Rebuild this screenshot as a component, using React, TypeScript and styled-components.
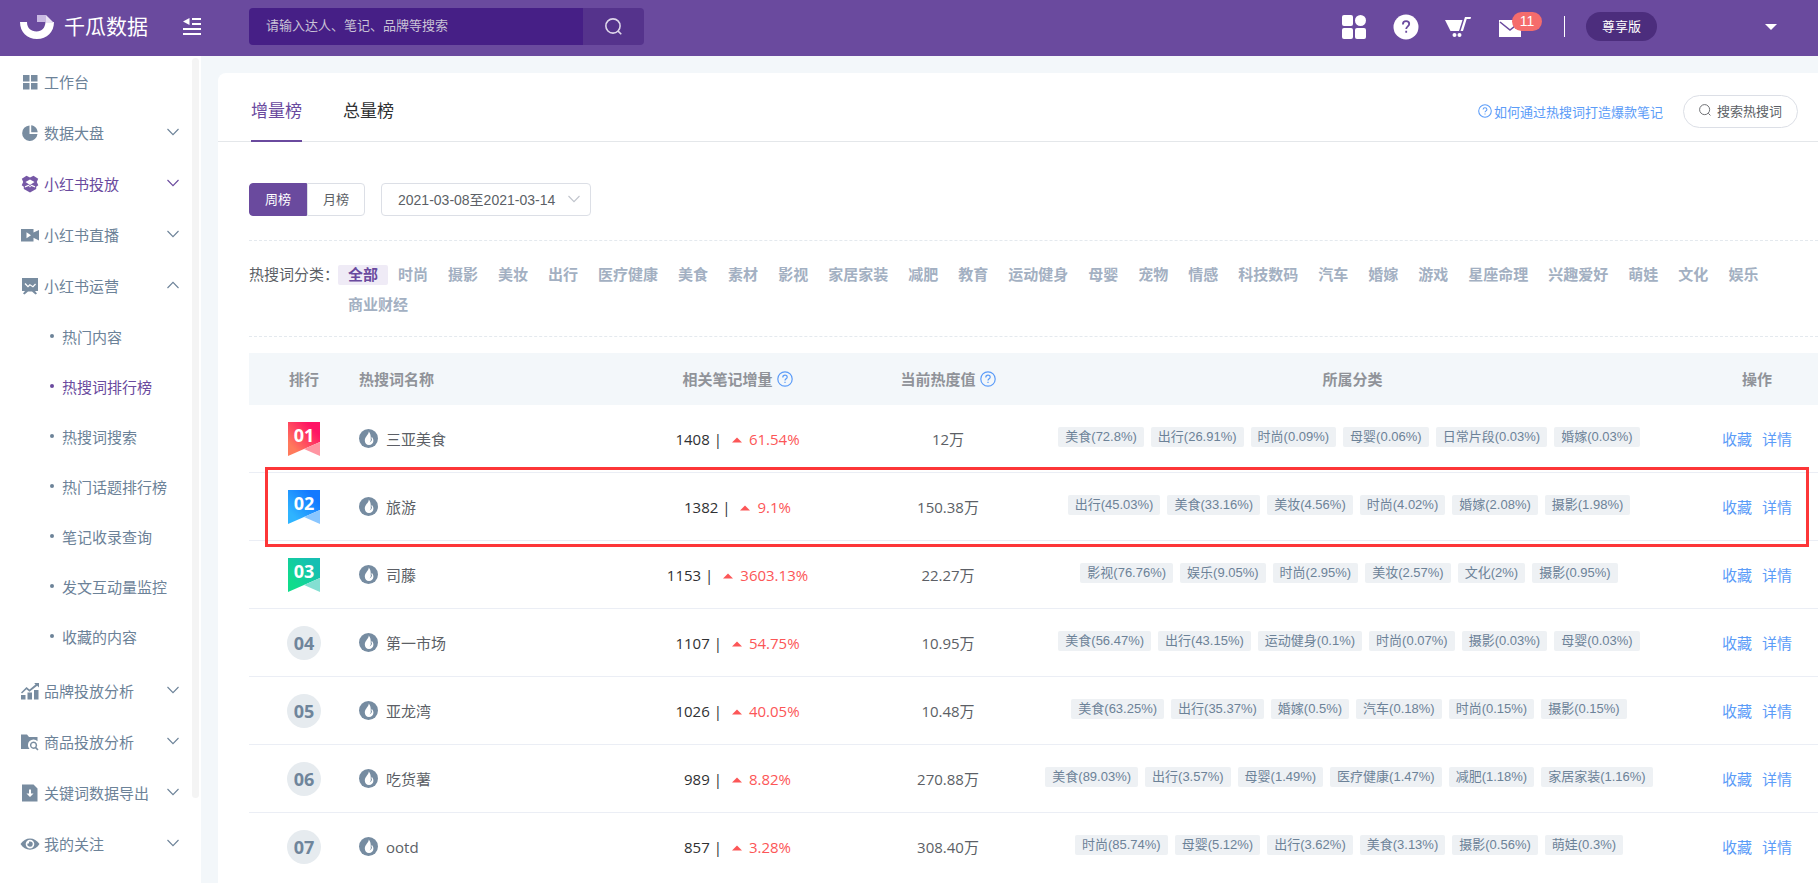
import React from "react";
import styled, { createGlobalStyle, css } from "styled-components";

const purple = "#6a4a9e";
const slate = "#6c8298";
const blue = "#5b9cf8";
const uiFont = `"Liberation Sans", "Noto Sans CJK SC", sans-serif`;
const textFont = `"Open Sans", "Noto Sans CJK SC", sans-serif`;

const GlobalStyle = createGlobalStyle`
  * { box-sizing: border-box; }
  body { margin: 0; background: #f3f7fa; font-family: ${uiFont}; font-size: 15px; color: #5c5f66; overflow-x: hidden; }
  button, input, select { font: inherit; color: inherit; }
  button { border: 0; padding: 0; background: none; cursor: pointer; }
  a { text-decoration: none; color: inherit; }
  ul { list-style: none; margin: 0; padding: 0; }
  svg { display: block; flex: none; }
`;

/* ---------- shell ---------- */
const Page = styled.div`
  min-height: 100vh;
  display: flex;
  flex-direction: column;
`;
const Header = styled.header`
  height: 56px;
  padding: 0 41px 3px 20px;
  display: flex;
  align-items: center;
  background: ${purple};
  color: #fff;
`;
const Brand = styled.a`
  width: 163px;
  display: flex;
  align-items: center;
  gap: 10px;
  font-size: 21px;
  line-height: 30px;
  white-space: nowrap;
`;
const SearchForm = styled.form`
  margin-left: 48px;
  display: flex;
  height: 37px;
  border-radius: 4px;
  overflow: hidden;
`;
const SearchInput = styled.input`
  width: 334px;
  border: 0;
  outline: 0;
  padding: 0 17px 2px;
  background: #461f86;
  font-size: 13px;
  &::placeholder { color: #c9c3d6; opacity: 1; }
`;
const SearchButton = styled.button`
  width: 61px;
  display: grid;
  place-items: center;
  background: #55338c;
`;
const HeaderTools = styled.nav`
  margin-left: auto;
  display: flex;
  align-items: center;
  gap: 26px;
`;
const ToolButton = styled.button`
  position: relative;
  width: 26px;
  height: 26px;
  display: grid;
  place-items: center;
`;
const Badge = styled.span`
  position: absolute;
  left: 15px;
  top: -2px;
  width: 30px;
  height: 19px;
  border-radius: 10px;
  background: #f56c6c;
  font-size: 14px;
  line-height: 19px;
  text-align: center;
`;
const Account = styled.div`
  margin-left: 15px;
  display: flex;
  align-items: center;
  gap: 21px;
`;
const Rule = styled.span`
  width: 1px;
  height: 21px;
  background: #fff;
`;
const Plan = styled.button`
  width: 71px;
  height: 29px;
  padding-bottom: 2px;
  border-radius: 15px;
  background: #4c2d7d;
  font-size: 13px;
`;
const AccountMenu = styled.button`
  margin-left: 87px;
`;
const Body = styled.div`
  flex: 1;
  display: flex;
`;

/* ---------- sidebar ---------- */
const Sidebar = styled.aside`
  position: relative;
  flex: none;
  width: 201px;
  background: #fff;
  color: ${slate};
`;
const ScrollThumb = styled.span`
  position: absolute;
  top: 2px;
  right: 2px;
  width: 7px;
  height: 740px;
  border-radius: 4px;
  background: #f4f4f4;
`;
const MenuButton = styled.button<{ $active?: boolean }>`
  width: 100%;
  height: 51px;
  padding: 0 22px 0 21px;
  display: flex;
  align-items: center;
  text-align: left;
  color: ${(p) => (p.$active ? purple : slate)};
`;
const MenuLabel = styled.span`
  flex: 1;
  margin-left: 5px;
`;
const SubMenu = styled.ul`
  padding-bottom: 4px;
`;
const SubLink = styled.a<{ $active?: boolean }>`
  height: 50px;
  padding-left: 50px;
  display: flex;
  align-items: center;
  gap: 8px;
  color: ${(p) => (p.$active ? purple : slate)};
  &::before {
    content: "";
    width: 4px;
    height: 4px;
    border-radius: 50%;
    background: currentColor;
  }
`;

/* ---------- content ---------- */
const Card = styled.main`
  flex: 1;
  min-width: 0;
  margin: 17px 0 0 17px;
  border-radius: 8px 0 0 0;
  background: #fff;
`;
const TabBar = styled.div`
  height: 69px;
  padding: 0 20px 0 33px;
  display: flex;
  align-items: center;
  border-bottom: 1px solid #e4e7ea;
`;
const Tab = styled.button<{ $active?: boolean }>`
  position: relative;
  height: 69px;
  margin-right: 41px;
  padding-top: 4px;
  font-size: 17px;
  color: #303133;
  ${(p) =>
    p.$active &&
    css`
      color: ${purple};
      &::after {
        content: "";
        position: absolute;
        left: 0;
        right: 0;
        bottom: 0;
        height: 2px;
        background: ${purple};
      }
    `}
`;
const HelpLink = styled.a`
  margin-left: auto;
  display: flex;
  align-items: center;
  gap: 2px;
  padding-top: 8px;
  font-size: 13px;
  color: ${blue};
`;
const RoundButton = styled.button`
  width: 115px;
  height: 33px;
  margin: 8px 0 0 20px;
  padding-bottom: 2px;
  display: flex;
  align-items: center;
  justify-content: center;
  gap: 6px;
  border: 1px solid #dcdfe6;
  border-radius: 17px;
  font-size: 13px;
`;
const Panel = styled.section`
  padding: 41px 0 0 31px;
`;
const Filters = styled.div`
  display: flex;
  gap: 16px;
  height: 57px;
`;
const Segment = styled.div`
  display: flex;
  height: 33px;
`;
const SegmentButton = styled.button<{ $active?: boolean }>`
  width: 58px;
  padding-bottom: 2px;
  border: 1px solid ${(p) => (p.$active ? purple : "#dcdfe6")};
  border-radius: ${(p) => (p.$active ? "4px 0 0 4px" : "0 4px 4px 0")};
  font-size: 13px;
  color: ${(p) => (p.$active ? "#fff" : "inherit")};
  background: ${(p) => (p.$active ? purple : "transparent")};
`;
const SelectBox = styled.div`
  position: relative;
  width: 210px;
  height: 33px;
  svg { position: absolute; right: 11px; top: 12px; pointer-events: none; }
`;
const Select = styled.select`
  width: 100%;
  height: 100%;
  padding: 0 16px;
  appearance: none;
  border: 1px solid #dcdfe6;
  border-radius: 4px;
  background: #fff;
  font-size: 14px;
`;
const Categories = styled.div`
  display: flex;
  padding: 22px 20px 21px 0;
  margin-bottom: 16px;
  border: dashed #e4e9ee;
  border-width: 1px 0;
`;
const CategoryLabel = styled.span`
  flex: none;
  width: 89px;
  line-height: 24px;
  white-space: nowrap;
`;
const CategoryList = styled.div`
  flex: 1;
  display: flex;
  flex-wrap: wrap;
  align-content: flex-start;
  gap: 10px 0;
  padding-top: 2px;
`;
const Category = styled.button<{ $active?: boolean }>`
  height: 20px;
  padding: 0 10px;
  border-radius: 2px;
  line-height: 20px;
  font-weight: 700;
  color: ${(p) => (p.$active ? purple : "#a3b0c2")};
  background: ${(p) => (p.$active ? "#efebf6" : "transparent")};
`;

/* ---------- table ---------- */
const Table = styled.table`
  width: 100%;
  table-layout: fixed;
  border-collapse: separate;
  border-spacing: 0;
  font-family: ${textFont};
`;
const Col = styled.col<{ $w?: number }>`
  ${(p) => p.$w && `width: ${p.$w}px;`}
`;
const Th = styled.th<{ $left?: boolean }>`
  height: 52px;
  padding: 0;
  background: #f3f7fa;
  color: #909399;
  font-weight: 700;
  line-height: 20px;
  text-align: ${(p) => (p.$left ? "left" : "center")};
`;
const HeadLabel = styled.span`
  display: inline-flex;
  align-items: center;
  gap: 4px;
  vertical-align: top;
`;
const Row = styled.tr`
  position: relative;
`;
const Td = styled.td<{ $left?: boolean }>`
  height: 68px;
  padding: 0;
  line-height: 20px;
  text-align: ${(p) => (p.$left ? "left" : "center")};
  border-bottom: 1px solid #ebeef5;
  ${Row}:last-child & { border-bottom-color: transparent; }
`;
const Rank = styled.span`
  width: 34px;
  height: 34px;
  margin: 0 auto;
  display: block;
  border-radius: 50%;
  background: #e6ebef;
  color: #6f859b;
  font-size: 18px;
  font-weight: 700;
  line-height: 34px;
`;
const RibbonRank = styled.span`
  position: relative;
  width: 32px;
  height: 34px;
  margin: 0 auto;
  display: block;
  color: #fff;
  font-size: 18px;
  font-weight: 700;
  line-height: 26px;
  svg { position: absolute; left: 0; top: 0; }
  span { position: relative; }
`;
const Name = styled.span`
  display: flex;
  align-items: center;
  gap: 8px;
`;
const Growth = styled.span`
  display: inline-flex;
  align-items: center;
  white-space: pre;
  color: #303133;
`;
const Percent = styled.span`
  display: inline-flex;
  align-items: center;
  gap: 7px;
  margin-left: 10px;
  color: #fc5657;
`;
const Tags = styled.div`
  display: flex;
  justify-content: center;
  padding-bottom: 3px;
  font-family: ${uiFont};
`;
const Tag = styled.span`
  height: 20px;
  margin-right: 7px;
  padding: 0 7px;
  border-radius: 2px;
  background: #eef1f4;
  color: ${slate};
  font-size: 13px;
  line-height: 20px;
  white-space: nowrap;
`;
const Actions = styled.div`
  display: flex;
  justify-content: center;
  gap: 10px;
  color: ${blue};
`;
const Highlight = styled.span`
  position: absolute;
  z-index: 1;
  inset: -6px 9px -6px 16px;
  border: 3px solid #fd3638;
  pointer-events: none;
`;

/* ---------- icons ---------- */
const Chevron = ({ up, color = "currentColor" }: { up?: boolean; color?: string }) => (
  <svg width="12" height="10" viewBox="0 0 12 10" fill="none" stroke={color} strokeWidth="1.100">
    <path d={up ? "M.5 7 6 1.300 11.500 7" : "M.5 1 6 6.700 11.500 1"} />
  </svg>
);
const Logo = () => (
  <svg width="34" height="24" viewBox="0 0 34 24">
    <path fill="#fff" d="M0 7h7c0 6 4 9.500 9.500 9.500S25 13 25.500 7H34c0 10-7 17-17 17S0 17 0 7Z" />
    <path fill="#c9b9e2" d="M17 0h9v7h-9z" />
    <path fill="#e9e1f3" d="M26 0l8 8h-8z" />
  </svg>
);
const Collapse = () => (
  <svg width="18" height="17" viewBox="0 0 18 17" fill="#fff">
    <path d="M9 0h9v2H9zM9 5h9v2H9zM0 10h18v2H0zM0 15h18v2H0zM6.500 0v7L0 3.500z" />
  </svg>
);
const Magnifier = ({ size, color, width }: { size: number; color: string; width: number }) => (
  <svg width={size} height={size} viewBox="0 0 16 16" fill="none" stroke={color} strokeWidth={width}>
    <circle cx="7.500" cy="7.500" r="6.700" />
    <path d="m12.300 12.300 3 3" />
  </svg>
);
const Question = ({ size }: { size: number }) => (
  <svg width={size} height={size} viewBox="0 0 16 16" fill="none" stroke={blue} strokeWidth="1.200">
    <circle cx="8" cy="8" r="7.200" />
    <path d="M5.800 6.400c0-1.400 1-2.200 2.200-2.200s2.200.8 2.200 2c0 1.500-2.200 1.700-2.200 3.300M8 10.800v1.300" />
  </svg>
);
const Drop = () => (
  <svg width="19" height="19" viewBox="0 0 19 19">
    <circle cx="9.500" cy="9.500" r="9.500" fill="#768ca1" />
    <path fill="#fff" d="M9.700 2.500c.5 3-3.900 5-3.900 8.900 0 2.600 1.700 4.600 4.200 4.600s4.400-1.900 4.400-4.300c0-1.500-.7-2.900-1.800-3.900.1 1.400-.3 2-.9 2.400.3-3-.3-6-2-7.700Z" />
    <path fill="#768ca1" d="M12.800 9.200c.5 1.700-.2 3.700-2.500 4.300 1.500-1 1.700-2.400 1.500-3.500Z" />
  </svg>
);
const Up = () => (
  <svg width="10" height="8" viewBox="0 0 10 8" fill="#fc5657"><path d="M5 2.500l5 5H0z" /></svg>
);

const ribbonColors = [
  ["#ff7a5c", "#ff1464", "#ff95a2"],
  ["#2fb4ff", "#1379ff", "#8ac6ff"],
  ["#10dc8c", "#16bfb2", "#84dfd2"],
];
const Ribbon = ({ index }: { index: number }) => {
  const [from, to, fold] = ribbonColors[index];
  return (
    <svg width="32" height="34" viewBox="0 0 32 34">
      <defs>
        <linearGradient id={`ribbon${index}`} x1="0" y1="1" x2="1" y2="0">
          <stop offset="0.200" stopColor={from} />
          <stop offset="0.800" stopColor={to} />
        </linearGradient>
      </defs>
      <path fill={`url(#ribbon${index})`} d="M0 0h32v20L0 34z" />
      <path fill={fold} d="M32 20v14l-16-7z" />
    </svg>
  );
};

const menuGlyphs: Record<string, React.ReactNode> = {
  grid: <path d="M2 2h6.500v6.500H2zM10 2h6.500v6.500H10zM2 10h6.500v6.500H2zM10 10h6.500v6.500H10z" />,
  pie: <path d="M8.500 1.500A7.700 7.700 0 1 0 16.500 10H8.500zM10.200 1.300v7h6.500c-.2-3.700-2.900-6.500-6.500-7z" />,
  box: (
    <path
      fillRule="evenodd"
      d="M5.500.8 9 2.600 12.500.8l4.700 3L15.800 7l1.500 3.300-2.100 1.400V14L9 17.500 2.800 14v-2.300L.7 10.300 2.200 7 .8 3.800zM9 4.400 4.500 7 9 10l4.500-3zM3.900 11.300v1.100l4-1.400L9 12.600l1.100-1.600 4 1.400v-1.100l-3.500-1.500L9 11.200 7.400 9.800z"
    />
  ),
  video: <path fillRule="evenodd" d="M0 3h12.500v3.500L18 4v10.500l-5.500-2.700V15.500H0zM5.500 6.300v6l4.500-3z" />,
  board: <path fillRule="evenodd" d="M1 1h16v13h-3l2 2.500-1.500 1L11 14.500H7L3.500 17.500 2 16.500 4 14H1zM3.500 7 7 10.500l2-2 3 2L15 7.500l-.9-.900-2.300 2.300-3-2L7 8.700 4.500 6z" />,
  growth: <path d="M0 13h4.500v4.500H0zM6.500 10.500H11v7H6.500zM13 8h4.500v9.500H13zM0 10.500 5.500 5l3 2.500 6-5L13.200 1H18v4.500l-1.800-1.700L8.500 9.800l-3-2.500L1 11.500z" />,
  folder: <path fillRule="evenodd" d="M0 1.500h6L8 4h8.500v4.200a5.200 5.200 0 0 0-8 7.800H0zM12.500 8.500a3.700 3.700 0 1 0 1.800 7l2.200 2 1-1-2-2.200a3.700 3.700 0 0 0-3-5.800zm0 1.500a2.200 2.200 0 1 1 0 4.400 2.200 2.200 0 0 1 0-4.400z" />,
  download: <path fillRule="evenodd" d="M1 .5h11.500l4 4v13H1zM8 5.500v4H5.500L9 13l3.500-3.500H10v-4z" />,
  eye: <path fillRule="evenodd" d="M-.5 9C4 1.500 14 1.500 18.500 9 14 16.500 4 16.500-.5 9zM9 4.800a4.300 4.300 0 1 0 0 8.600 4.300 4.300 0 0 0 0-8.600zm0 1.600a2.700 2.700 0 1 1-2.600 2.200c1 .4 2-.5 1.600-1.900.3-.2.600-.3 1-.3z" />,
};
const MenuIcon = ({ name }: { name: string }) => (
  <svg width="18" height="18" viewBox="0 0 18 18" fill="currentColor" opacity="0.920" overflow="visible">
    {menuGlyphs[name]}
  </svg>
);

/* ---------- data ---------- */
const menu: { icon: string; label: string; active?: boolean; leaf?: boolean; children?: string[] }[] = [
  { icon: "grid", label: "工作台", leaf: true },
  { icon: "pie", label: "数据大盘" },
  { icon: "box", label: "小红书投放", active: true },
  { icon: "video", label: "小红书直播" },
  {
    icon: "board",
    label: "小红书运营",
    children: ["热门内容", "热搜词排行榜", "热搜词搜索", "热门话题排行榜", "笔记收录查询", "发文互动量监控", "收藏的内容"],
  },
  { icon: "growth", label: "品牌投放分析" },
  { icon: "folder", label: "商品投放分析" },
  { icon: "download", label: "关键词数据导出" },
  { icon: "eye", label: "我的关注" },
];
const categories =
  "全部 时尚 摄影 美妆 出行 医疗健康 美食 素材 影视 家居家装 减肥 教育 运动健身 母婴 宠物 情感 科技数码 汽车 婚嫁 游戏 星座命理 兴趣爱好 萌娃 文化 娱乐 商业财经".split(" ");
const rows = [
  { name: "三亚美食", notes: "1408", pct: "61.54%", heat: "12万", tags: "美食(72.8%) 出行(26.91%) 时尚(0.09%) 母婴(0.06%) 日常片段(0.03%) 婚嫁(0.03%)" },
  { name: "旅游", notes: "1382", pct: "9.1%", heat: "150.38万", tags: "出行(45.03%) 美食(33.16%) 美妆(4.56%) 时尚(4.02%) 婚嫁(2.08%) 摄影(1.98%)", marked: true },
  { name: "司藤", notes: "1153", pct: "3603.13%", heat: "22.27万", tags: "影视(76.76%) 娱乐(9.05%) 时尚(2.95%) 美妆(2.57%) 文化(2%) 摄影(0.95%)" },
  { name: "第一市场", notes: "1107", pct: "54.75%", heat: "10.95万", tags: "美食(56.47%) 出行(43.15%) 运动健身(0.1%) 时尚(0.07%) 摄影(0.03%) 母婴(0.03%)" },
  { name: "亚龙湾", notes: "1026", pct: "40.05%", heat: "10.48万", tags: "美食(63.25%) 出行(35.37%) 婚嫁(0.5%) 汽车(0.18%) 时尚(0.15%) 摄影(0.15%)" },
  { name: "吃货薯", notes: "989", pct: "8.82%", heat: "270.88万", tags: "美食(89.03%) 出行(3.57%) 母婴(1.49%) 医疗健康(1.47%) 减肥(1.18%) 家居家装(1.16%)" },
  { name: "ootd", notes: "857", pct: "3.28%", heat: "308.40万", tags: "时尚(85.74%) 母婴(5.12%) 出行(3.62%) 美食(3.13%) 摄影(0.56%) 萌娃(0.3%)" },
];

export default function App() {
  return (
    <Page>
      <GlobalStyle />
      <Header>
        <Brand href="#"><Logo />千瓜数据</Brand>
        <button aria-label="收起菜单"><Collapse /></button>
        <SearchForm onSubmit={(e) => e.preventDefault()}>
          <SearchInput aria-label="搜索" placeholder="请输入达人、笔记、品牌等搜索" />
          <SearchButton aria-label="搜索"><Magnifier size={17} color="#ded6ea" width={1.5} /></SearchButton>
        </SearchForm>
        <HeaderTools>
          <ToolButton aria-label="应用">
            <svg width="24" height="24" viewBox="0 0 24 24" fill="#fff">
              <rect width="11" height="11" rx="2" /><circle cx="18.500" cy="5.500" r="5.500" />
              <rect y="13" width="11" height="11" rx="2" /><rect x="13" y="13" width="11" height="11" rx="2" />
            </svg>
          </ToolButton>
          <ToolButton aria-label="帮助">
            <svg width="26" height="26" viewBox="0 0 26 26">
              <circle cx="13" cy="13" r="12.500" fill="#fff" />
              <path d="M9.900 10.400c0-2 1.400-3.200 3.200-3.200s3.100 1.100 3.100 2.800c0 2.200-3 2.500-3 5M13.200 16.800v2" fill="none" stroke={purple} strokeWidth="1.800" />
            </svg>
          </ToolButton>
          <ToolButton aria-label="购物车">
            <svg width="26" height="20" viewBox="0 0 26 20" fill="#fff">
              <path d="M0 3h17.500L14 14H5.500z" />
              <path d="M15.500 14 20 0h6l-.5 2h-3.800L18 14z" />
              <circle cx="9.500" cy="18" r="2" /><circle cx="14.500" cy="18" r="2" />
            </svg>
          </ToolButton>
          <ToolButton aria-label="消息">
            <svg width="22" height="22" viewBox="0 0 22 22">
              <path d="M0 4h22v17H0z" fill="#fff" />
              <path d="m1 6 10 8 10-8" fill="none" stroke={purple} strokeWidth="1.600" />
            </svg>
            <Badge>11</Badge>
          </ToolButton>
          <Account>
            <Rule />
            <Plan>尊享版</Plan>
            <AccountMenu aria-label="账户">
              <svg width="12" height="6" viewBox="0 0 12 6" fill="#fff"><path d="M0 0h12L6 6z" /></svg>
            </AccountMenu>
          </Account>
        </HeaderTools>
      </Header>

      <Body>
        <Sidebar>
          <ul>
            {menu.map((item) => (
              <li key={item.label}>
                <MenuButton $active={item.active}>
                  <MenuIcon name={item.icon} />
                  <MenuLabel>{item.label}</MenuLabel>
                  {!item.leaf && <Chevron up={!!item.children} />}
                </MenuButton>
                {item.children && (
                  <SubMenu>
                    {item.children.map((label) => (
                      <li key={label}><SubLink href="#" $active={label === "热搜词排行榜"}>{label}</SubLink></li>
                    ))}
                  </SubMenu>
                )}
              </li>
            ))}
          </ul>
          <ScrollThumb />
        </Sidebar>

        <Card>
          <TabBar>
            <Tab $active>增量榜</Tab>
            <Tab>总量榜</Tab>
            <HelpLink href="#"><Question size={14} />如何通过热搜词打造爆款笔记</HelpLink>
            <RoundButton><Magnifier size={12} color="#606266" width={1.2} />搜索热搜词</RoundButton>
          </TabBar>
          <Panel>
            <Filters>
              <Segment>
                <SegmentButton $active>周榜</SegmentButton>
                <SegmentButton>月榜</SegmentButton>
              </Segment>
              <SelectBox>
                <Select aria-label="日期范围"><option>2021-03-08至2021-03-14</option></Select>
                <Chevron color="#c0c4cc" />
              </SelectBox>
            </Filters>
            <Categories>
              <CategoryLabel>热搜词分类：</CategoryLabel>
              <CategoryList>
                {categories.map((c, i) => <Category key={c} $active={i === 0}>{c}</Category>)}
              </CategoryList>
            </Categories>
            <Table>
              <colgroup>
                <Col $w={110} /><Col $w={229} /><Col $w={299} /><Col $w={122} /><Col /><Col $w={122} />
              </colgroup>
              <thead>
                <tr>
                  <Th>排行</Th>
                  <Th $left>热搜词名称</Th>
                  <Th><HeadLabel>相关笔记增量<Question size={16} /></HeadLabel></Th>
                  <Th><HeadLabel>当前热度值<Question size={16} /></HeadLabel></Th>
                  <Th>所属分类</Th>
                  <Th>操作</Th>
                </tr>
              </thead>
              <tbody>
                {rows.map((row, i) => (
                  <Row key={row.name}>
                    <Td>
                      {i < 3 ? <RibbonRank><Ribbon index={i} /><span>0{i + 1}</span></RibbonRank> : <Rank>0{i + 1}</Rank>}
                    </Td>
                    <Td $left><Name><Drop />{row.name}</Name></Td>
                    <Td><Growth>{row.notes} |<Percent><Up />{row.pct}</Percent></Growth></Td>
                    <Td>{row.heat}</Td>
                    <Td><Tags>{row.tags.split(" ").map((t) => <Tag key={t}>{t}</Tag>)}</Tags></Td>
                    <Td>
                      <Actions><a href="#">收藏</a><a href="#">详情</a></Actions>
                      {row.marked && <Highlight />}
                    </Td>
                  </Row>
                ))}
              </tbody>
            </Table>
          </Panel>
        </Card>
      </Body>
    </Page>
  );
}
